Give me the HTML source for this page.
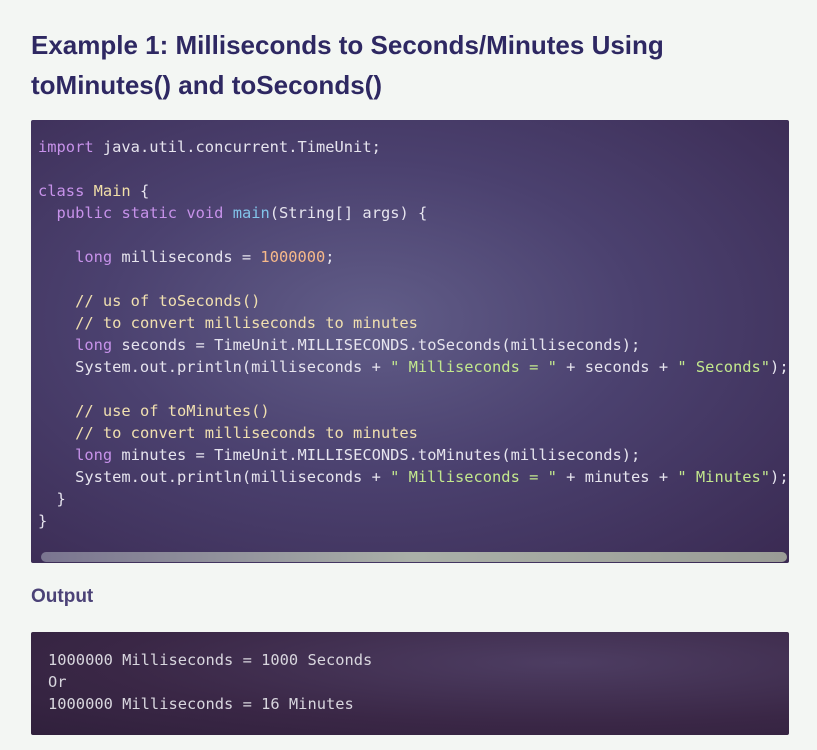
<!DOCTYPE html>
<html><head><style>
body{margin:0;width:817px;height:750px;background:#f3f6f3;overflow:hidden;position:relative;font-family:"Liberation Sans",sans-serif}
h1{position:absolute;left:31px;top:25px;margin:0;font-size:26px;line-height:40px;color:#2e2862;font-weight:bold;letter-spacing:0px}
.code{position:absolute;left:31px;top:120px;width:758px;height:443px;background:radial-gradient(ellipse at 45% 45%,#615d88 0%,#4b416f 45%,#3a2a52 100%);border-radius:2px;overflow:hidden}
pre{margin:0;font-family:"DejaVu Sans Mono",monospace;font-size:15.4px;line-height:22px;color:#e6e4ee;white-space:pre}
.c pre{position:absolute;left:7px;top:16px}
.k{color:#c792ea}.y{color:#f1dfa8}.b{color:#82c4ea}.n{color:#f7b98a}.s{color:#c3e88d}.m{color:#f1e0b0}
.sb{position:absolute;left:10px;right:2px;top:432px;height:10px;border-radius:5px;background:linear-gradient(90deg,#7a7590,#aab0a8 50%,#9a9c96)}
h2{position:absolute;left:31px;top:586px;margin:0;font-size:19px;color:#4b4277;font-weight:bold}
.out{position:absolute;left:31px;top:632px;width:758px;height:103px;background:radial-gradient(ellipse at 70% 30%,#4d3d62 0%,#3a2746 60%,#30203c 100%);border-radius:2px}
.out pre{position:absolute;left:17px;top:17px;color:#d8d6de}
</style></head><body>
<h1>Example 1: Milliseconds to Seconds/Minutes Using<br>toMinutes() and toSeconds()</h1>
<div class="code c"><pre><span class="k">import</span> java.util.concurrent.TimeUnit;

<span class="k">class</span> <span class="y">Main</span> {
  <span class="k">public</span> <span class="k">static</span> <span class="k">void</span> <span class="b">main</span>(String[] args) {

    <span class="k">long</span> milliseconds = <span class="n">1000000</span>;

    <span class="m">// us of toSeconds()</span>
    <span class="m">// to convert milliseconds to minutes</span>
    <span class="k">long</span> seconds = TimeUnit.MILLISECONDS.toSeconds(milliseconds);
    System.out.println(milliseconds + <span class="s">" Milliseconds = "</span> + seconds + <span class="s">" Seconds"</span>);

    <span class="m">// use of toMinutes()</span>
    <span class="m">// to convert milliseconds to minutes</span>
    <span class="k">long</span> minutes = TimeUnit.MILLISECONDS.toMinutes(milliseconds);
    System.out.println(milliseconds + <span class="s">" Milliseconds = "</span> + minutes + <span class="s">" Minutes"</span>);
  }
}</pre><div class="sb"></div></div>
<h2>Output</h2>
<div class="out"><pre>1000000 Milliseconds = 1000 Seconds
Or
1000000 Milliseconds = 16 Minutes</pre></div>
</body></html>
